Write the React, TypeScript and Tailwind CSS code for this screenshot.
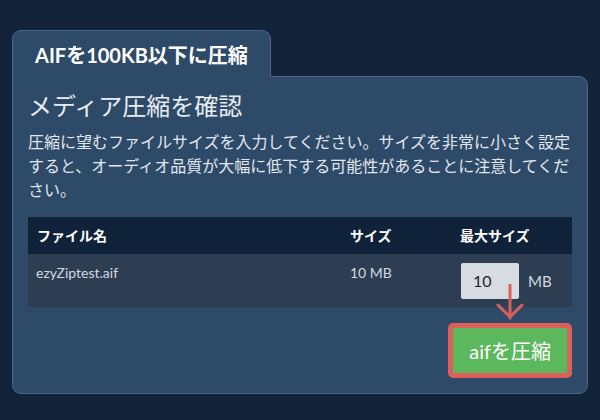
import React from "react";

export default function App() {
  const font = { fontFamily: "Lato, 'Noto Sans CJK JP', 'Noto Sans', sans-serif" };
  return (
    <div className="w-[600px] h-[420px] bg-[#12233a] pt-[30px] pl-[12px]" style={font}>
      <div className="w-[576px] flex flex-col">
        <div className="relative z-10 self-start h-[47px] -mb-px px-[22px] pt-[2px] flex items-center bg-[#2d4a69] border border-b-0 border-[#4b6688] rounded-t-[9px] text-white font-bold text-[20px]">
          AIFを100KB以下に圧縮
        </div>
        <div className="bg-[#2d4a69] border border-[#4b6688] rounded-b-[9px] rounded-tr-[9px] px-[15px] pt-[14px] pb-[15px] flex flex-col">
          <h1 className="text-[24px] leading-[30px] text-[#e9edf2] font-normal">メディア圧縮を確認</h1>
          <p className="mt-[9px] text-[16px] leading-[24px] text-[#e3e8ee]">
            圧縮に望むファイルサイズを入力してください。サイズを非常に小さく設定すると、オーディオ品質が大幅に低下する可能性があることに注意してください。
          </p>
          <div className="mt-[15px] flex flex-col">
            <div className="grid grid-cols-[312px_110px_122px] h-[37px] items-center bg-[#10223a] text-white font-bold text-[14px]">
              <div className="pl-[9px]">ファイル名</div>
              <div className="pl-[10px]">サイズ</div>
              <div className="pl-[10px]">最大サイズ</div>
            </div>
            <div className="grid grid-cols-[312px_110px_122px] h-[53px] bg-[#2d3e52] text-[14px] text-[#d3d9e0]">
              <div className="pl-[8px] pt-[9px] leading-[20px]">ezyZiptest.aif</div>
              <div className="pl-[10px] pt-[9px] leading-[20px]">10 MB</div>
              <div className="relative pl-[11px] pt-[9px] flex items-start gap-[9px]">
                <div className="w-[58px] h-[36px] bg-[#d7dce3] rounded-[2px] pl-[12px] flex items-center text-[16px] text-[#1e2430]">10</div>
                <div className="h-[36px] flex items-center text-[15px] text-[#d3d9e0]">MB</div>
                <svg className="absolute left-[45px] top-[30px]" width="30" height="36" viewBox="0 0 30 36" fill="none">
                  <path d="M15 1 V34 M3 21 L15 33 L27 21" stroke="#dc5f59" strokeWidth="3" strokeLinecap="round" strokeLinejoin="round" />
                </svg>
              </div>
            </div>
          </div>
          <div className="mt-[16px] flex justify-end">
            <button className="h-[55px] px-[16px] border-[5px] border-[#dc5f59] rounded-[5px] bg-[#5cb85c] text-white text-[20px] leading-[30px]">
              aifを圧縮
            </button>
          </div>
        </div>
      </div>
    </div>
  );
}
